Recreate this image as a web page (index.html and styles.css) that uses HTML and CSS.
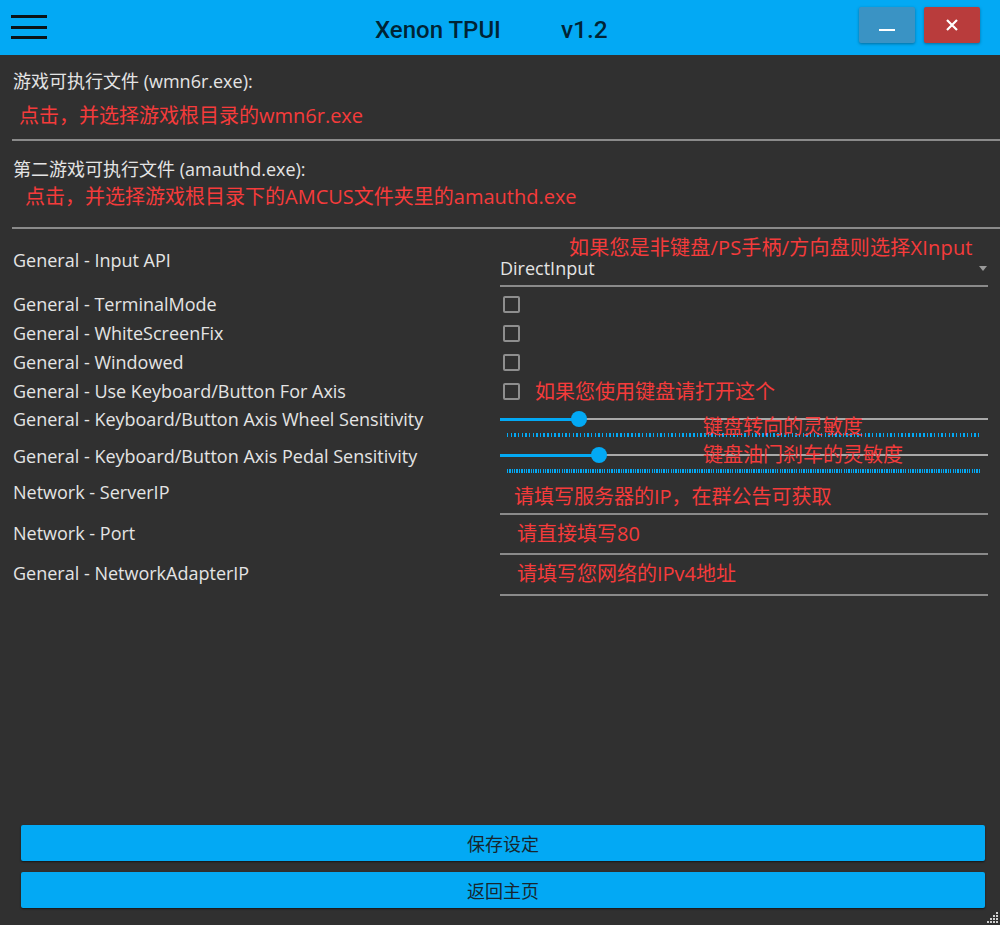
FILE: index.html
```html
<!DOCTYPE html>
<html lang="zh-CN">
<head>
<meta charset="utf-8">
<title>Xenon TPUI</title>
<link rel="stylesheet" href="styles.css">
</head>
<body>
<div class="window">
  <header class="titlebar">
    <button class="menu-btn" aria-label="menu">
      <svg width="36" height="24" viewBox="0 0 36 24">
        <rect x="0" y="0" width="36" height="3"/>
        <rect x="0" y="11" width="36" height="3"/>
        <rect x="0" y="21" width="36" height="3"/>
      </svg>
    </button>
    <div class="title"><span class="app-name">Xenon TPUI</span><span class="version">v1.2</span></div>
    <div class="win-btns">
      <button class="win-btn min" aria-label="minimize"><span class="dash"></span></button>
      <button class="win-btn close" aria-label="close">
        <svg width="12" height="12" viewBox="0 0 12 12"><path d="M1 1 L11 11 M11 1 L1 11" stroke="#fff" stroke-width="2.2" fill="none"/></svg>
      </button>
    </div>
  </header>

  <main class="content">
    <section class="file-block first">
      <div class="file-label">游戏可执行文件 (wmn6r.exe):</div>
      <div class="hint file-hint h1">点击，并选择游戏根目录的wmn6r.exe</div>
    </section>
    <hr class="rule r1">
    <section class="file-block second">
      <div class="file-label">第二游戏可执行文件 (amauthd.exe):</div>
      <div class="hint file-hint h2">点击，并选择游戏根目录下的AMCUS文件夹里的amauthd.exe</div>
    </section>
    <hr class="rule r2">

    <div class="settings">
      <div class="row row-select">
        <div class="label">General - Input API</div>
        <div class="control select-control">
          <div class="hint select-hint">如果您是非键盘/PS手柄/方向盘则选择XInput</div>
          <div class="select"><span class="select-value">DirectInput</span><span class="caret"></span></div>
        </div>
      </div>

      <div class="row row-check">
        <div class="label">General - TerminalMode</div>
        <div class="control"><span class="checkbox"></span></div>
      </div>
      <div class="row row-check">
        <div class="label">General - WhiteScreenFix</div>
        <div class="control"><span class="checkbox"></span></div>
      </div>
      <div class="row row-check">
        <div class="label">General - Windowed</div>
        <div class="control"><span class="checkbox"></span></div>
      </div>
      <div class="row row-check">
        <div class="label">General - Use Keyboard/Button For Axis</div>
        <div class="control"><span class="checkbox"></span><span class="hint check-hint">如果您使用键盘请打开这个</span></div>
      </div>

      <div class="row row-slider wheel">
        <div class="label">General - Keyboard/Button Axis Wheel Sensitivity</div>
        <div class="control slider">
          <div class="track">
            <span class="fill" style="width:79px"></span><span class="rest"></span>
            <span class="thumb" style="left:71px"></span>
          </div>
          <div class="ticks"></div>
          <div class="hint slider-hint">键盘转向的灵敏度</div>
        </div>
      </div>
      <div class="row row-slider pedal">
        <div class="label">General - Keyboard/Button Axis Pedal Sensitivity</div>
        <div class="control slider">
          <div class="track">
            <span class="fill" style="width:99px"></span><span class="rest"></span>
            <span class="thumb" style="left:91px"></span>
          </div>
          <div class="ticks dense"></div>
          <div class="hint slider-hint">键盘油门刹车的灵敏度</div>
        </div>
      </div>

      <div class="row row-field server">
        <div class="label">Network - ServerIP</div>
        <div class="control field"><span class="hint">请填写服务器的IP，在群公告可获取</span></div>
      </div>
      <div class="row row-field port">
        <div class="label">Network - Port</div>
        <div class="control field"><span class="hint">请直接填写80</span></div>
      </div>
      <div class="row row-field adapter">
        <div class="label">General - NetworkAdapterIP</div>
        <div class="control field"><span class="hint">请填写您网络的IPv4地址</span></div>
      </div>
    </div>
  </main>

  <footer class="actions">
    <button class="action-btn">保存设定</button>
    <button class="action-btn">返回主页</button>
    <svg class="grip" width="13" height="13" viewBox="0 0 13 13" fill="#cfcfcf">
      <rect x="10" y="1" width="2" height="2"/>
      <rect x="7" y="4" width="2" height="2"/><rect x="10" y="4" width="2" height="2"/>
      <rect x="4" y="7" width="2" height="2"/><rect x="7" y="7" width="2" height="2"/><rect x="10" y="7" width="2" height="2"/>
      <rect x="1" y="10" width="2" height="2"/><rect x="4" y="10" width="2" height="2"/><rect x="7" y="10" width="2" height="2"/><rect x="10" y="10" width="2" height="2"/>
    </svg>
  </footer>
</div>
</body>
</html>
```

FILE: styles.css
```css
* { box-sizing: border-box; }

html, body {
  margin: 0;
  padding: 0;
  background: #303030;
}

body {
  font-family: "Open Sans", "Noto Sans CJK SC", sans-serif;
  color: #e4e4e4;
}

.window {
  width: 1000px;
  height: 925px;
  display: flex;
  flex-direction: column;
  position: relative;
  overflow: hidden;
}

/* ---------- title bar ---------- */
.titlebar {
  height: 55px;
  flex: none;
  background: #03a9f4;
  display: flex;
  align-items: flex-start;
}

.menu-btn {
  border: 0;
  background: none;
  padding: 0;
  margin: 15px 0 0 11px;
  width: 36px;
  height: 24px;
  display: block;
}
.menu-btn svg { display: block; fill: #0b1317; }

.title {
  margin-left: 328px;
  padding-top: 16px;
  font-family: Roboto, "Liberation Sans", sans-serif;
  font-weight: 500;
  font-size: 24px;
  line-height: 28px;
  color: rgba(0, 0, 0, 0.8);
  display: flex;
  gap: 60px;
  white-space: nowrap;
}
.version { font-size: 24.5px; }

.win-btns {
  margin-left: auto;
  margin-right: 20px;
  margin-top: 7px;
  display: flex;
  gap: 9px;
}

.win-btn {
  width: 56px;
  height: 36px;
  border: 0;
  border-radius: 2px;
  padding: 0;
  display: flex;
  justify-content: center;
  align-items: center;
  box-shadow: 0 1px 3px rgba(0, 0, 0, 0.35);
}
.win-btn.min {
  background: #3a93c4;
  align-items: flex-end;
  padding-bottom: 12px;
}
.win-btn.close { background: #b93c3c; }
.dash {
  display: block;
  width: 16px;
  height: 2px;
  background: #fff;
}
.win-btn svg { display: block; }

/* ---------- content ---------- */
.content {
  flex: 1;
  padding-top: 14px;
}

.hint {
  color: #f53b3b;
  font-size: 20px;
}

.file-label {
  font-size: 18px;
  line-height: 24px;
  padding-left: 13px;
}
.file-block.second .file-label { margin-top: 16px; }

.file-hint { line-height: 28px; }
.file-hint.h1 { margin-top: 9px; padding-left: 19px; }
.file-hint.h2 { margin-top: 2px; padding-left: 25px; }

.rule {
  border: 0;
  height: 2px;
  background: #8a8a8a;
  margin: 0 0 0 12px;
}
.rule.r1 { margin-top: 9px; }
.rule.r2 { margin-top: 16px; }

/* ---------- settings grid ---------- */
.row {
  display: flex;
}
.label {
  width: 500px;
  flex: none;
  padding-left: 13px;
  font-size: 18px;
  white-space: nowrap;
}
.control {
  width: 488px;
  flex: none;
}

/* select row */
.row-select { height: 61px; }
.row-select .label { align-self: center; line-height: 24px; }
.select-control { padding-top: 9px; }
.select-hint {
  line-height: 20px;
  padding-left: 69px;
  white-space: nowrap;
  letter-spacing: 0.2px;
}
.select {
  display: flex;
  justify-content: space-between;
  align-items: center;
  padding-bottom: 7px;
  border-bottom: 2px solid #8a8a8a;
}
.select-value {
  font-size: 18px;
  line-height: 20px;
}
.caret {
  width: 0;
  height: 0;
  border-left: 4px solid transparent;
  border-right: 4px solid transparent;
  border-top: 5px solid #9a9a9a;
  margin-right: 1px;
}

/* checkbox rows */
.row-check { height: 29px; align-items: center; }
.row-check .label { line-height: 29px; }
.row-check .control { display: flex; align-items: center; }
.checkbox {
  width: 17px;
  height: 17px;
  border: 2px solid #8e8e8e;
  border-radius: 2px;
  margin-left: 3px;
  flex: none;
}
.check-hint {
  margin-left: 15px;
  line-height: 24px;
  white-space: nowrap;
}

/* slider rows */
.row-slider .label { line-height: 26px; }
.row-slider.wheel { height: 37px; }
.row-slider.pedal { height: 31px; }
.slider { position: relative; }
.track {
  position: relative;
  height: 26px;
  display: flex;
  align-items: center;
}
.pedal .track { height: 24px; }
.fill {
  height: 3px;
  background: #03a9f4;
  flex: none;
}
.rest {
  flex: 1;
  height: 2px;
  background: #a8a8a8;
}
.thumb {
  position: absolute;
  top: 50%;
  width: 16px;
  height: 16px;
  margin-top: -8px;
  border-radius: 50%;
  background: #03a9f4;
}
.ticks {
  margin-left: 7px;
  width: 474px;
  height: 4px;
  margin-top: 1px;
  background: repeating-linear-gradient(to right, #03a9f4 0 1.4px, transparent 1.4px 3.65px);
}
.ticks.dense {
  margin-top: 2px;
  background: repeating-linear-gradient(to right, #03a9f4 0 1.3px, transparent 1.3px 2.37px);
}
.slider-hint {
  position: absolute;
  left: 203px;
  line-height: 24px;
  white-space: nowrap;
}
.wheel .slider-hint { top: 9px; }
.pedal .slider-hint { top: 0; }

/* text field rows */
.row-field .label { line-height: 26px; padding-top: 5px; }
.field {
  border-bottom: 2px solid #8a8a8a;
}
.field .hint { line-height: 26px; display: block; white-space: nowrap; }
.server { height: 41px; }
.server .field { padding: 10px 0 3px 14px; }
.port { height: 40px; }
.port .field { padding: 6px 0 6px 17px; }
.adapter { height: 41px; }
.adapter .field { padding: 6px 0 7px 17px; }

/* ---------- footer buttons ---------- */
.actions {
  flex: none;
  display: flex;
  flex-direction: column;
  gap: 11px;
  padding: 0 15px 17px 21px;
}
.action-btn {
  height: 36px;
  border: 0;
  border-radius: 2px;
  background: #03a9f4;
  box-shadow: 0 1px 2px rgba(0, 0, 0, 0.55);
  font-family: "Open Sans", "Noto Sans CJK SC", sans-serif;
  font-size: 18px;
  color: #17262e;
  padding: 0;
}
.grip {
  position: absolute;
  right: 1px;
  bottom: 1px;
}
```
